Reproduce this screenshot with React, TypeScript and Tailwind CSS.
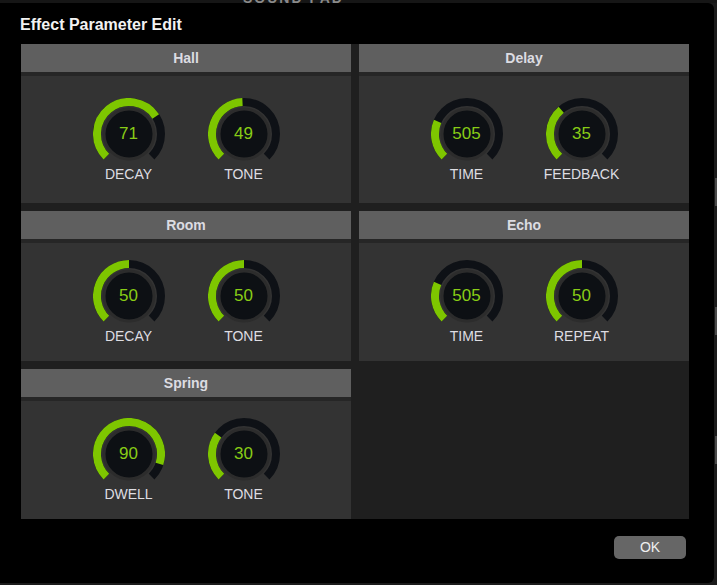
import React from "react";

type KnobProps = { value: number; fraction: number; label: string };

const polar = (r: number, deg: number) => {
  const a = (deg * Math.PI) / 180;
  return [36 + r * Math.sin(a), 36 - r * Math.cos(a)];
};

const arc = (r: number, from: number, to: number) => {
  const [x1, y1] = polar(r, from);
  const [x2, y2] = polar(r, to);
  const large = to - from > 180 ? 1 : 0;
  return `M ${x1} ${y1} A ${r} ${r} 0 ${large} 1 ${x2} ${y2}`;
};

const Knob = ({ value, fraction, label }: KnobProps) => {
  const end = -135 + 270 * fraction;
  return (
    <div className="flex flex-col items-center w-[90px]">
      <div className="relative w-[72px] h-[72px]">
        <svg width="72" height="72" viewBox="0 0 72 72">
          <path d={arc(32, -135, 135)} stroke="#0e1116" strokeWidth="8" fill="none" />
          <path d={arc(32, -135, end)} stroke="#7ec600" strokeWidth="8" fill="none" />
          <circle cx="36" cy="36" r="25" fill="#0d1014" stroke="#2c2c2c" strokeWidth="3" />
        </svg>
        <div className="absolute inset-0 flex items-center justify-center text-[17px] text-[#88cc16]">
          {value}
        </div>
      </div>
      <p className="-mt-[4px] text-[14px] leading-4 text-[#dedde2]">{label}</p>
    </div>
  );
};

type Param = { value: number; max: number; label: string };

const Panel = ({ title, params }: { title: string; params: Param[] }) => (
  <div className="flex flex-col">
    <div className="h-[28px] pt-[1px] bg-[#5f5f5f] flex items-center justify-center text-[14px] font-bold text-[#dcdce2]">
      {title}
    </div>
    <div className="h-[4px] bg-[#262626]" />
    <div className="flex-1 bg-[#333333] flex items-center justify-center gap-[25px]">
      {params.map((p, i) => (
        <Knob key={i} value={p.value} fraction={p.value / p.max} label={p.label} />
      ))}
    </div>
  </div>
);

const effects = [
  {
    title: "Hall",
    params: [
      { value: 71, max: 100, label: "DECAY" },
      { value: 49, max: 100, label: "TONE" },
    ],
  },
  {
    title: "Delay",
    params: [
      { value: 505, max: 2000, label: "TIME" },
      { value: 35, max: 100, label: "FEEDBACK" },
    ],
  },
  {
    title: "Room",
    params: [
      { value: 50, max: 100, label: "DECAY" },
      { value: 50, max: 100, label: "TONE" },
    ],
  },
  {
    title: "Echo",
    params: [
      { value: 505, max: 2000, label: "TIME" },
      { value: 50, max: 100, label: "REPEAT" },
    ],
  },
  {
    title: "Spring",
    params: [
      { value: 90, max: 100, label: "DWELL" },
      { value: 30, max: 100, label: "TONE" },
    ],
  },
];

export default function App() {
  return (
    <div
      className="w-[717px] h-[585px] bg-[#1b1b1b] flex flex-col overflow-hidden"
      style={{ fontFamily: "'Liberation Sans', Arial, sans-serif" }}
    >
      {/* window behind */}
      <div className="h-[3px] bg-[#161616] overflow-hidden pl-[243px] shrink-0">
        <p className="-mt-[12px] text-[14px] font-bold tracking-[2px] text-[#8a8a8a]">SOUND PAD</p>
      </div>

      <div className="flex flex-1">
        {/* dialog */}
        <div className="w-[714px] h-[580px] bg-black rounded-r-[6px] flex flex-col">
          <div className="h-[41px] pl-5 pt-[2px] flex items-center text-[16px] font-bold text-[#f2f2f2]">
            Effect Parameter Edit
          </div>

          <div className="ml-[21px] w-[668px] grid grid-cols-2 grid-rows-[159px_150px_150px] gap-2 bg-[#1f1f1f]">
            {effects.map((e) => (
              <Panel key={e.title} title={e.title} params={e.params} />
            ))}
          </div>

          <div className="flex justify-end pr-[28px] mt-[17px]">
            <button className="w-[72px] h-[23px] rounded-[5px] bg-[#666666] text-[14px] text-[#efefef]">
              OK
            </button>
          </div>
        </div>

        {/* scrollbar marks of the window behind */}
        <div className="flex-1 flex flex-col items-end pt-[175px] gap-[101px]">
          <div className="w-[2px] h-[28px] bg-[#4a4a4a]" />
          <div className="w-[2px] h-[28px] bg-[#4a4a4a]" />
          <div className="w-[2px] h-[28px] bg-[#4a4a4a]" />
        </div>
      </div>
    </div>
  );
}
